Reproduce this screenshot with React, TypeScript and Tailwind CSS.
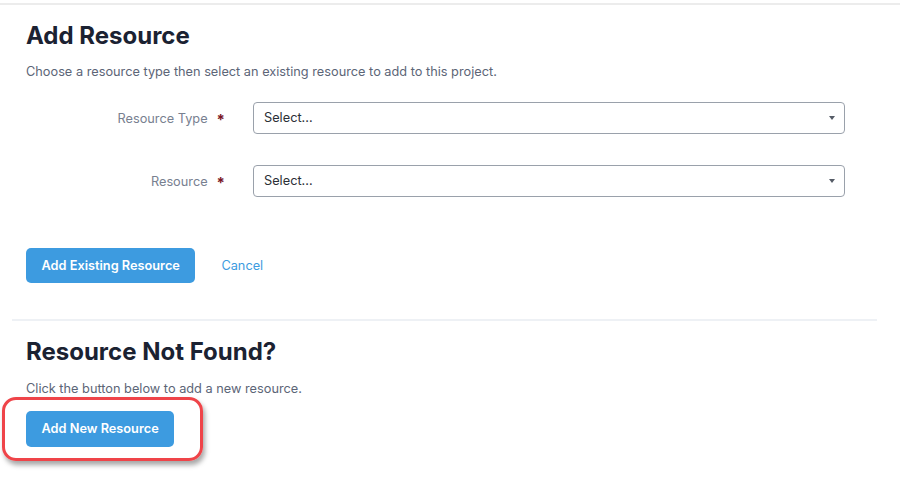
function SelectBox() {
    return (
        <div className="flex h-[32px] w-[592px] items-center justify-between rounded-[4px] border border-[#9aa1ab] bg-white pl-[10px] pr-[9px]">
            <span className="text-[12.75px] text-[#2b2f36]">Select...</span>
            <span className="h-0 w-0 border-x-[3.5px] border-t-[4px] border-x-transparent border-t-[#555b66]" />
        </div>
    );
}

function FieldRow({ label }: { label: string }) {
    return (
        <div className="flex items-center">
            <div className="flex w-[225px] items-center justify-end pt-[2px]">
                <span className="text-[12.75px] text-[#788090]">{label}</span>
                <span className="ml-[9px] text-[15px] font-bold leading-none text-[#7a1526]">*</span>
            </div>
            <div className="ml-[28px]">
                <SelectBox />
            </div>
        </div>
    );
}

export default function App() {
    return (
        <div className="h-[487px] w-[900px] bg-white font-['Inter',sans-serif]">
            <div className="mt-[3px] h-[2px] w-full bg-[#ececec]" />

            <div className="pl-[26px] pt-[15px]">
                <h1 className="text-[24px] font-bold leading-[32px] text-[#1b2232]">Add Resource</h1>
                <p className="mt-[11px] text-[12.75px] leading-[18px] text-[#5c6577]">
                    Choose a resource type then select an existing resource to add to this project.
                </p>
            </div>

            <div className="mt-[21px] flex flex-col gap-[31px]">
                <FieldRow label="Resource Type" />
                <FieldRow label="Resource" />
            </div>

            <div className="mt-[51px] flex items-center pl-[26px]">
                <button className="h-[35px] rounded-[5px] bg-[#3d9be0] px-[15.5px] text-[12.75px] font-semibold text-white">
                    Add Existing Resource
                </button>
                <button className="ml-[26px] text-[12.75px] text-[#3d9be0]">Cancel</button>
            </div>

            <div className="ml-[12px] mt-[36px] h-[2px] w-[865px] bg-[#eef1f5]" />

            <div className="pl-[26px] pt-[15px]">
                <h2 className="text-[24px] font-bold leading-[32px] text-[#1b2232]">Resource Not Found?</h2>
                <p className="mt-[12px] text-[12.75px] leading-[18px] text-[#5c6577]">
                    Click the button below to add a new resource.
                </p>
                <div className="relative mt-[13px] inline-block">
                    <div className="pointer-events-none absolute bottom-[-14px] left-[-24px] right-[-29px] top-[-14px] rounded-[14px] border-[3px] border-[#ef4449] shadow-[2px_4px_5px_rgba(0,0,0,0.35)]" />
                    <button className="h-[36px] rounded-[5px] bg-[#3d9be0] px-[15.5px] text-[12.75px] font-semibold text-white">
                        Add New Resource
                    </button>
                </div>
            </div>
        </div>
    );
}
